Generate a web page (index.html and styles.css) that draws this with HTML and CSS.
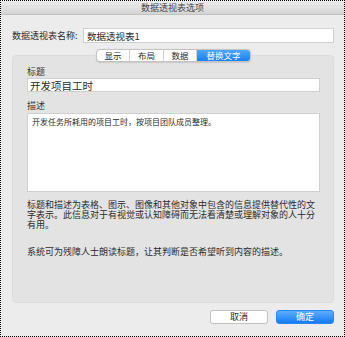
FILE: index.html
```html
<!DOCTYPE html>
<html lang="zh-CN">
<head>
<meta charset="utf-8">
<link rel="stylesheet" href="styles.css">
</head>
<body>
<div class="window">
  <div class="titlebar">数据透视表选项</div>
  <div class="name-row">
    <span class="name-label">数据透视表名称:</span>
    <div class="name-input">数据透视表1</div>
  </div>
  <div class="tabs">
    <div class="tab">显示</div>
    <div class="tab">布局</div>
    <div class="tab">数据</div>
    <div class="tab active">替换文字</div>
  </div>
  <div class="panel">
    <div class="field-label">标题</div>
    <div class="text-input">开发项目工时</div>
    <div class="field-label desc-label">描述</div>
    <div class="textarea">开发任务所耗用的项目工时，按项目团队成员整理。</div>
    <p class="help">标题和描述为表格、图示、图像和其他对象中包含的信息提供替代性的文字表示。此信息对于有视觉或认知障碍而无法看清楚或理解对象的人十分有用。</p>
    <p class="help help2">系统可为残障人士朗读标题，让其判断是否希望听到内容的描述。</p>
  </div>
  <div class="buttons">
    <div class="btn">取消</div>
    <div class="btn primary">确定</div>
  </div>
</div>
</body>
</html>
```
FILE: styles.css
```css
* { box-sizing: border-box; }
html, body { margin: 0; padding: 0; }
body {
  font-family: "Noto Sans CJK SC", "Noto Sans", sans-serif;
  color: #2b2b2b;
  background: #ececec;
}
.window {
  width: 345px;
  height: 337px;
  border: 1px dotted #000;
  background: #ececec;
  display: flex;
  flex-direction: column;
}
.titlebar {
  height: 14px;
  line-height: 13px;
  font-size: 9px;
  text-align: center;
  color: #4a4a4a;
  background: linear-gradient(#ececec, #d4d4d4);
  border-bottom: 1px solid #c2c2c2;
}
.name-row {
  display: flex;
  align-items: center;
  margin: 13px 10px 0 11px;
}
.name-label {
  font-size: 9px;
  width: 71px;
  white-space: nowrap;
}
.name-input {
  flex: 1;
  height: 15px;
  line-height: 14px;
  font-size: 9.5px;
  padding-left: 3px;
  background: #fff;
  border: 1px solid #d0d0d0;
}
.tabs {
  display: flex;
  align-self: flex-start;
  margin: 6px 0 0 95px;
  height: 13px;
  border: 1px solid #c4c4c4;
  border-radius: 4px;
  background: #fff;
  position: relative;
  z-index: 1;
  box-shadow: 0 0.5px 1px rgba(0,0,0,0.12);
}
.tab {
  font-size: 8.5px;
  line-height: 11px;
  text-align: center;
  width: 33px;
  border-right: 1px solid #d2d2d2;
  color: #2b2b2b;
}
.tab:nth-child(2) { width: 34px; }
.tab.active {
  width: 53px;
  border-right: none;
  color: #fff;
  background: linear-gradient(#4ea6ff, #1a7ff8);
  border-radius: 0 3px 3px 0;
}
.panel {
  flex: 1;
  margin: -7px 10px 0 11px;
  padding: 11px 13px 0 14px;
  background: #e3e3e3;
  border: 1px solid #dcdcdc;
  border-radius: 4px;
}
.field-label {
  font-size: 9px;
  line-height: 10px;
  color: #333;
}
.text-input {
  margin-top: 1px;
  height: 14px;
  line-height: 13px;
  font-size: 10.5px;
  padding-left: 2px;
  background: #fff;
  border: 1px solid #cfcfcf;
}
.desc-label { margin-top: 9px; }
.textarea {
  margin-top: 2px;
  height: 79px;
  padding: 2px 0 0 4px;
  font-size: 8px;
  line-height: 11px;
  background: #fff;
  border: 1px solid #cfcfcf;
}
.help {
  margin: 8px 0 0 0;
  width: 292px;
  font-size: 9px;
  line-height: 10px;
  color: #2b2b2b;
}
.help2 { margin-top: 17px; }
.buttons {
  display: flex;
  justify-content: flex-end;
  gap: 8px;
  margin: 7px 10px 12px 0;
}
.btn {
  width: 58px;
  height: 14px;
  font-size: 9px;
  line-height: 12px;
  text-align: center;
  background: #fff;
  border: 1px solid #c3c3c3;
  border-radius: 3px;
  color: #2b2b2b;
}
.btn.primary {
  color: #fff;
  border-color: #2a86f5;
  background: linear-gradient(#5cadff, #167bf6);
}
```
